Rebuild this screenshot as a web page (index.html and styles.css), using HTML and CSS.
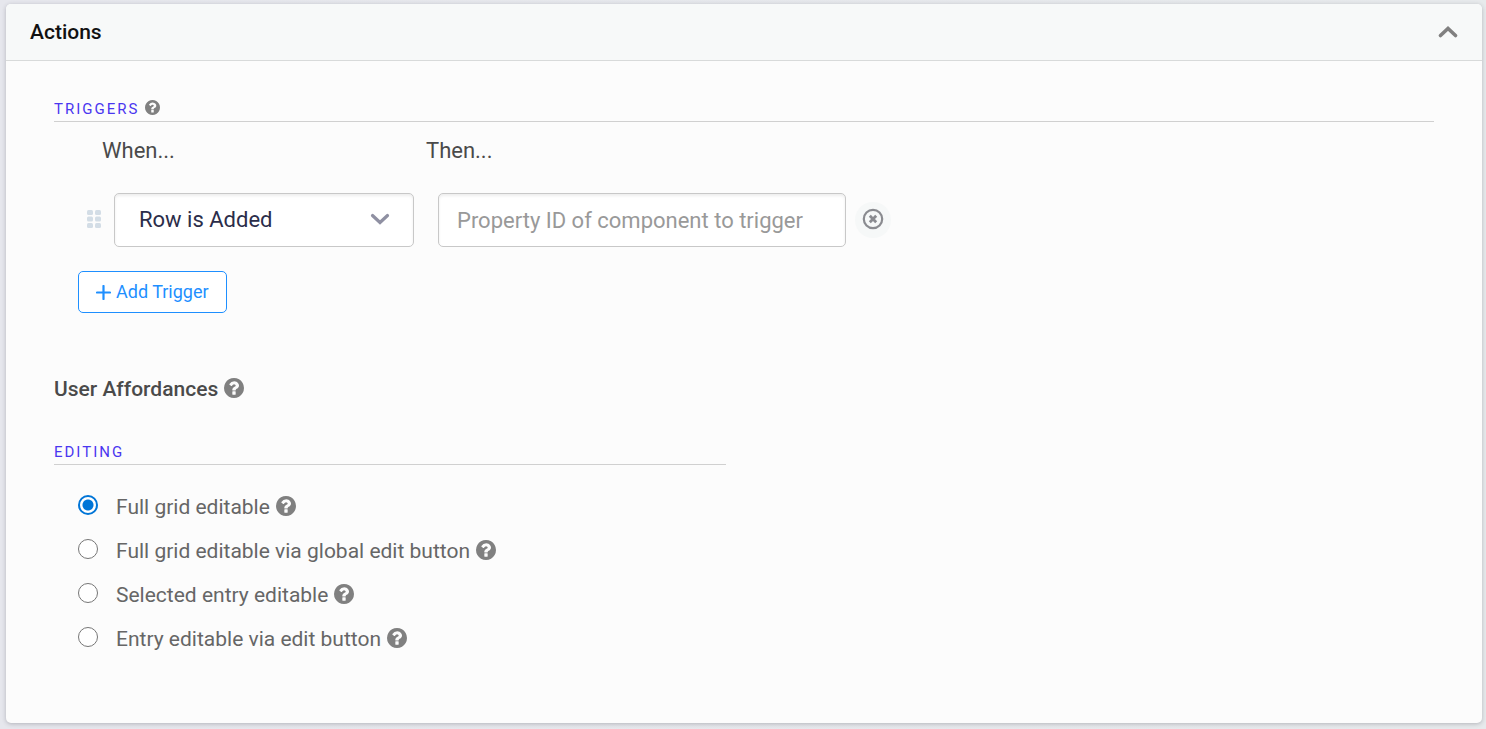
FILE: index.html
```
<!DOCTYPE html>
<html lang="en">
<head>
    <meta charset="UTF-8">
    <meta name="viewport" content="width=device-width, initial-scale=1.0">
    <title>Actions</title>
    <link rel="stylesheet" href="styles.css">
</head>
<body>
    <!-- shared icons -->
    <svg class="sprite" aria-hidden="true">
        <symbol id="help" viewBox="128 128 1536 1536">
            <path d="M1024 1376v-192q0-14-9-23t-23-9h-192q-14 0-23 9t-9 23v192q0 14 9 23t23 9h192q14 0 23-9t9-23zm256-672q0-88-55.5-163t-138.5-116-170-41q-243 0-371 213-15 24 8 42l132 100q7 6 19 6 16 0 25-12 53-68 86-92 34-24 86-24 48 0 85.5 26t37.5 59q0 38-20 61t-68 45q-63 28-115.5 86.500t-52.5 125.500v36q0 14 9 23t23 9h192q14 0 23-9t9-23q0-19 21.5-49.500t54.500-49.500q32-18 49-28.500t46-35 44.500-48 28-60.500 12.500-81zm384 192q0 209-103 385.500t-279.500 279.500-385.500 103-385.500-103-279.500-279.500-103-385.500 103-385.500 279.500-279.500 385.500-103 385.500 103 279.500 279.500 103 385.500z"/>
        </symbol>
    </svg>

    <main class="panel">
        <header class="panel-header">
            <h1>Actions</h1>
            <button class="collapse" type="button" aria-label="Collapse">
                <svg width="20" height="12" viewBox="0 0 20 12"><path d="M2.500 9.500L10 2.500l7.500 7" fill="none" stroke="currentColor" stroke-width="3.600" stroke-linecap="round"/></svg>
            </button>
        </header>

        <div class="panel-body">
            <section class="triggers">
                <h2 class="section-title">Triggers <svg class="help small"><use href="#help"/></svg></h2>
                <div class="trigger-grid">
                    <label class="column-label" for="when">When...</label>
                    <label class="column-label" for="then">Then...</label>
                    <div class="when">
                        <svg class="drag" width="16" height="20" viewBox="-1 0 16 20" fill="currentColor">
                            <rect width="6" height="5" rx="1.500"/><rect x="8" width="6" height="5" rx="1.500"/>
                            <rect y="6.500" width="6" height="5" rx="1.500"/><rect x="8" y="6.500" width="6" height="5" rx="1.500"/>
                            <rect y="13" width="6" height="5" rx="1.500"/><rect x="8" y="13" width="6" height="5" rx="1.500"/>
                        </svg>
                        <div class="select-wrap">
                            <select id="when">
                                <option>Row is Added</option>
                            </select>
                            <svg class="arrow" width="20" height="12" viewBox="0 0 20 12"><path d="M2.500 2.500L10 9.500l7.500-7" fill="none" stroke="currentColor" stroke-width="3.200" stroke-linecap="round"/></svg>
                        </div>
                    </div>
                    <div class="then">
                        <input id="then" type="text" placeholder="Property ID of component to trigger">
                        <button class="remove" type="button" aria-label="Remove trigger">
                            <svg width="22" height="22" viewBox="0 0 22 22" fill="none" stroke="currentColor"><circle cx="11" cy="11" r="9.200" stroke-width="2.200"/><path d="M7.800 7.800l6.400 6.400M14.200 7.800l-6.400 6.400" stroke-width="2.800"/></svg>
                        </button>
                    </div>
                </div>
                <button class="add" type="button">
                    <svg width="15" height="15" viewBox="0 0 15 15"><path d="M7.500 1v13M1 7.500h13" stroke="currentColor" stroke-width="2.200" stroke-linecap="round"/></svg>
                    Add Trigger
                </button>
            </section>

            <section class="affordances">
                <h2 class="group-title">User Affordances <svg class="help"><use href="#help"/></svg></h2>
                <h3 class="section-title">Editing</h3>
                <div class="options">
                    <div class="option">
                        <input type="radio" name="editing" id="edit-full" checked>
                        <label for="edit-full">Full grid editable</label>
                        <svg class="help"><use href="#help"/></svg>
                    </div>
                    <div class="option">
                        <input type="radio" name="editing" id="edit-global">
                        <label for="edit-global">Full grid editable via global edit button</label>
                        <svg class="help"><use href="#help"/></svg>
                    </div>
                    <div class="option">
                        <input type="radio" name="editing" id="edit-selected">
                        <label for="edit-selected">Selected entry editable</label>
                        <svg class="help"><use href="#help"/></svg>
                    </div>
                    <div class="option">
                        <input type="radio" name="editing" id="edit-entry">
                        <label for="edit-entry">Entry editable via edit button</label>
                        <svg class="help"><use href="#help"/></svg>
                    </div>
                </div>
            </section>
        </div>
    </main>
</body>
</html>
```
FILE: styles.css
```
* {
    box-sizing: border-box;
}

body {
    margin: 0;
    min-height: 100vh;
    padding: 4px 4px 6px 6px;
    display: flex;
    background: linear-gradient(90deg, #e6e7ed, #e7eaec);
    font-family: Roboto, sans-serif;
    font-size: 21px;
    line-height: 24px;
    color: #4a4a4a;
}

h1, h2, h3 {
    margin: 0;
}

button, input, select {
    font: inherit;
}

.sprite {
    position: absolute;
    width: 0;
    height: 0;
}

.panel {
    flex: 1;
    background: #fcfcfc;
    border-radius: 5px;
    box-shadow: 0 1px 4px rgba(60, 60, 70, 0.3);
}

.panel-header {
    display: flex;
    align-items: center;
    justify-content: space-between;
    padding: 16px 24px;
    background: #f7f9f9;
    border-bottom: 1px solid #d8dada;
    border-radius: 5px 5px 0 0;
}

.panel-header h1 {
    font-size: 21px;
    font-weight: 500;
    color: #111;
}

.collapse {
    display: flex;
    padding: 0;
    border: none;
    background: none;
    color: #808080;
    cursor: pointer;
}

.panel-body {
    padding: 36px 48px;
}

.section-title {
    display: flex;
    align-items: center;
    gap: 6px;
    border-bottom: 1px solid #d0d0d0;
    font-size: 15px;
    font-weight: 400;
    letter-spacing: 2px;
    text-transform: uppercase;
    color: #4a36f0;
}

.help {
    width: 20px;
    height: 20px;
    flex: none;
    margin-bottom: 3px;
    fill: #808080;
}

.help.small {
    width: 15px;
    height: 15px;
}

.trigger-grid {
    display: grid;
    grid-template-columns: 300px 1fr;
    column-gap: 24px;
    row-gap: 30px;
    padding: 17px 0 0 60px;
    font-size: 22px;
}

/* labels start left of their fields */
.column-label {
    margin-left: -12px;
}

.when {
    display: flex;
    align-items: center;
    gap: 12px;
    margin-left: -28px;
}

.drag {
    flex: none;
    color: #d3dde6;
}

.select-wrap {
    position: relative;
    flex: 1;
}

.select-wrap select,
.then input {
    width: 100%;
    height: 54px;
    border: 1px solid #c8c8c8;
    border-radius: 5px;
    background: #fff;
    box-shadow: inset 0 2px 3px rgba(0, 0, 0, 0.07);
}

.select-wrap select {
    appearance: none;
    padding: 0 48px 0 24px;
    color: #2b2d4a;
}

.arrow {
    position: absolute;
    top: 20px;
    right: 24px;
    color: #8f90a2;
    pointer-events: none;
}

.then {
    display: flex;
    align-items: center;
    gap: 9px;
}

.then input {
    max-width: 408px;
    padding: 0 18px;
}

.then input::placeholder {
    color: #999;
}

.remove {
    display: flex;
    align-items: center;
    justify-content: center;
    width: 36px;
    height: 36px;
    padding: 0 0 3px;
    border: none;
    border-radius: 50%;
    background: #f6f8f8;
    color: #8a8b90;
    cursor: pointer;
}

.add {
    display: flex;
    align-items: center;
    gap: 5px;
    height: 42px;
    margin: 24px 0 0 24px;
    padding: 0 17px;
    border: 1px solid #1e8fff;
    border-radius: 5px;
    background: #fff;
    font-size: 18px;
    color: #1e8fff;
    cursor: pointer;
}

.affordances {
    max-width: 672px;
    margin-top: 64px;
}

.group-title {
    display: flex;
    align-items: center;
    gap: 6px;
    margin-bottom: 39px;
    font-size: 21px;
    font-weight: 500;
}

.options {
    display: flex;
    flex-direction: column;
    gap: 20px;
    padding: 30px 0 0 24px;
    color: #666;
}

.option {
    display: flex;
    align-items: center;
    gap: 6px;
}

.option input {
    appearance: none;
    flex: none;
    width: 20px;
    height: 20px;
    margin: 0 12px 4px 0;
    border: 1px solid #767676;
    border-radius: 50%;
    background: #fff;
}

.option input:checked {
    border: 2px solid #0075d7;
    background: radial-gradient(circle, #0075d7 5px, #fff 6px);
}
```
